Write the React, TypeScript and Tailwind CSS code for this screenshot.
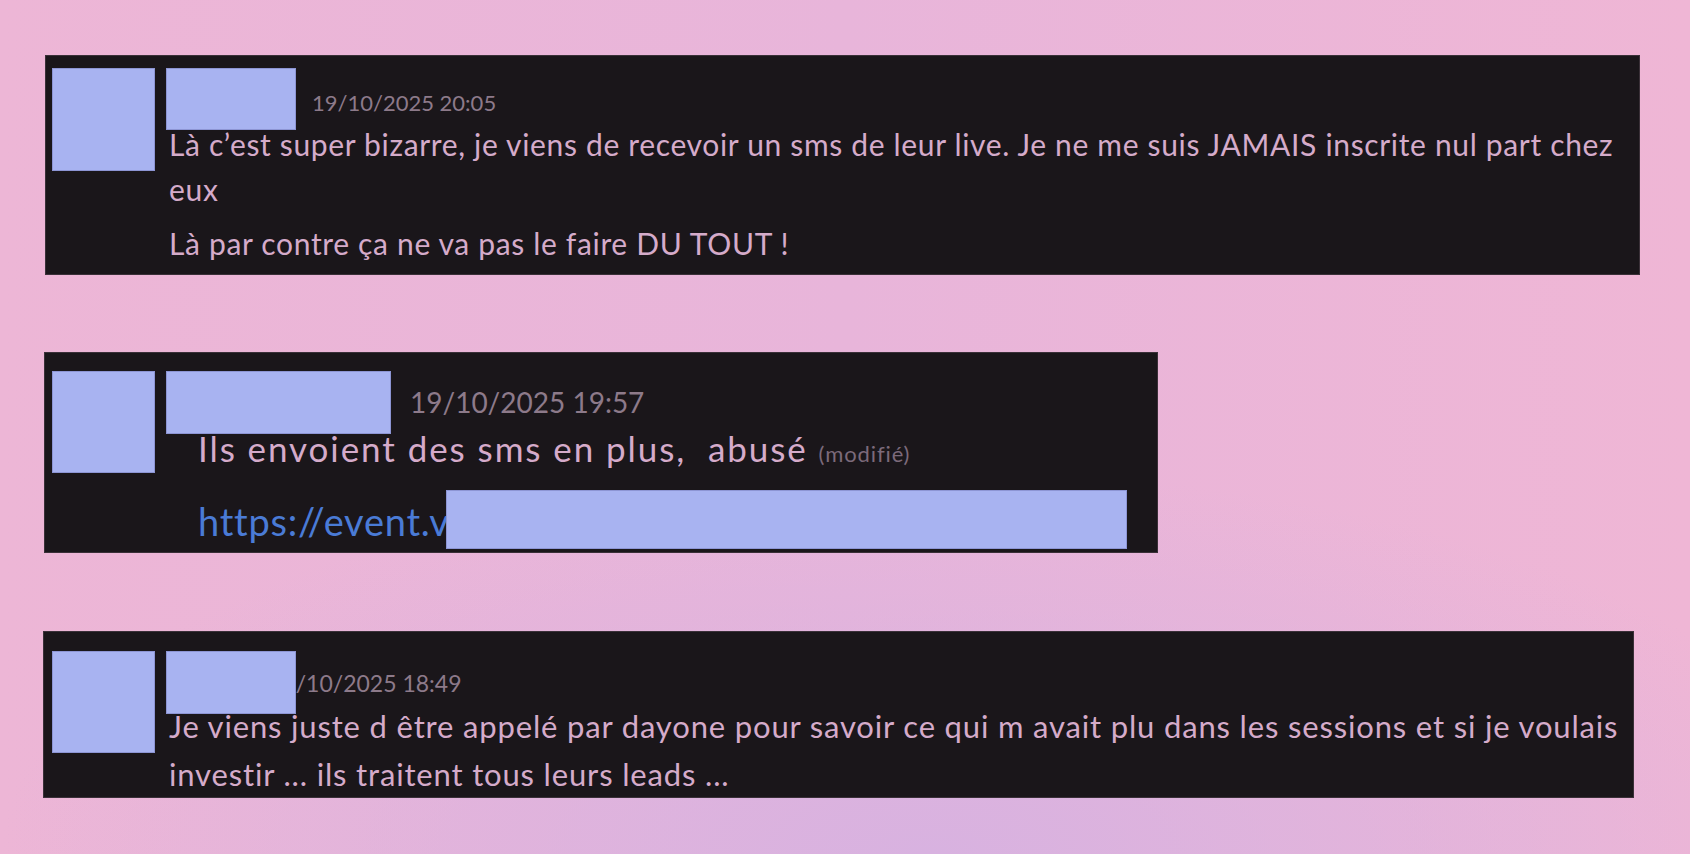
const Block = ({ className }: { className: string }) => (
  <div className={`shrink-0 bg-[#a8b3f1] border border-[#8d95d4] ${className}`} />
);

export default function App() {
  return (
    <div className="min-h-[854px] w-full overflow-hidden pt-[55px] font-[Lato,sans-serif] [font-variant-ligatures:none] bg-[radial-gradient(ellipse_55%_45%_at_55%_100%,#d8b2e0,transparent),linear-gradient(90deg,#edb6d6,#e8b5da_50%,#efb6d5)]">
      {/* first message */}
      <div className="ml-[45px] flex h-[220px] w-[1595px] border border-[#3a3038] bg-[#1a161a] pl-[6px] pt-[12px]">
        <Block className="h-[103px] w-[103px]" />
        <div className="ml-[11px] flex-1">
          <div className="flex items-start">
            <Block className="h-[62px] w-[130px]" />
            <span className="ml-[16px] mt-[24px] text-[22px] leading-none text-[#8d7a8a]">19/10/2025 20:05</span>
          </div>
          <div className="-mt-[8px] pl-[3px] text-[30px] leading-[45px] tracking-[0.022em] text-[#d5abca]">
            <p>Là c’est super bizarre, je viens de recevoir un sms de leur live. Je ne me suis JAMAIS inscrite nul part chez eux</p>
            <p className="mt-[9px]">Là par contre ça ne va pas le faire DU TOUT !</p>
          </div>
        </div>
      </div>

      {/* second message */}
      <div className="ml-[44px] mt-[77px] flex h-[201px] w-[1114px] border border-[#3a3038] bg-[#1a161a] pl-[7px] pt-[18px]">
        <Block className="h-[102px] w-[103px]" />
        <div className="ml-[11px] flex-1">
          <div className="flex items-start">
            <Block className="h-[63px] w-[225px]" />
            <span className="ml-[19px] mt-[17px] text-[28px] leading-none text-[#8d7a8a]">19/10/2025 19:57</span>
          </div>
          <p className="-mt-[8px] pl-[32px] text-[35px] leading-[45px] tracking-[0.055em] text-[#d5abca]">
            Ils envoient des sms en plus,&nbsp; abusé{" "}
            <span className="text-[22px] tracking-[0.04em] text-[#7c6a7a]">(modifié)</span>
          </p>
          <div className="relative mt-[20px] pl-[32px] text-[38px] leading-[50px] tracking-[0.02em] text-[#4a7bd6]">
            https://event.v
            <div className="absolute left-[280px] top-[-6px] h-[59px] w-[681px] bg-[#a8b3f1] border border-[#8d95d4]" />
          </div>
        </div>
      </div>

      {/* third message */}
      <div className="ml-[43px] mt-[78px] flex h-[167px] w-[1591px] border border-[#3a3038] bg-[#1a161a] pl-[8px] pt-[19px]">
        <Block className="h-[102px] w-[103px]" />
        <div className="ml-[11px] flex-1">
          <div className="flex items-start">
            <Block className="relative z-10 h-[63px] w-[130px]" />
            <span className="-ml-[27px] mt-[21px] text-[23px] leading-none text-[#8d7a8a]">19/10/2025 18:49</span>
          </div>
          <p className="-mt-[12px] pl-[3px] text-[31px] leading-[48px] tracking-[0.027em] text-[#d5abca]">
            Je viens juste d être appelé par dayone pour savoir ce qui m avait plu dans les sessions et si je voulais investir ... ils traitent tous leurs leads ...
          </p>
        </div>
      </div>
    </div>
  );
}
